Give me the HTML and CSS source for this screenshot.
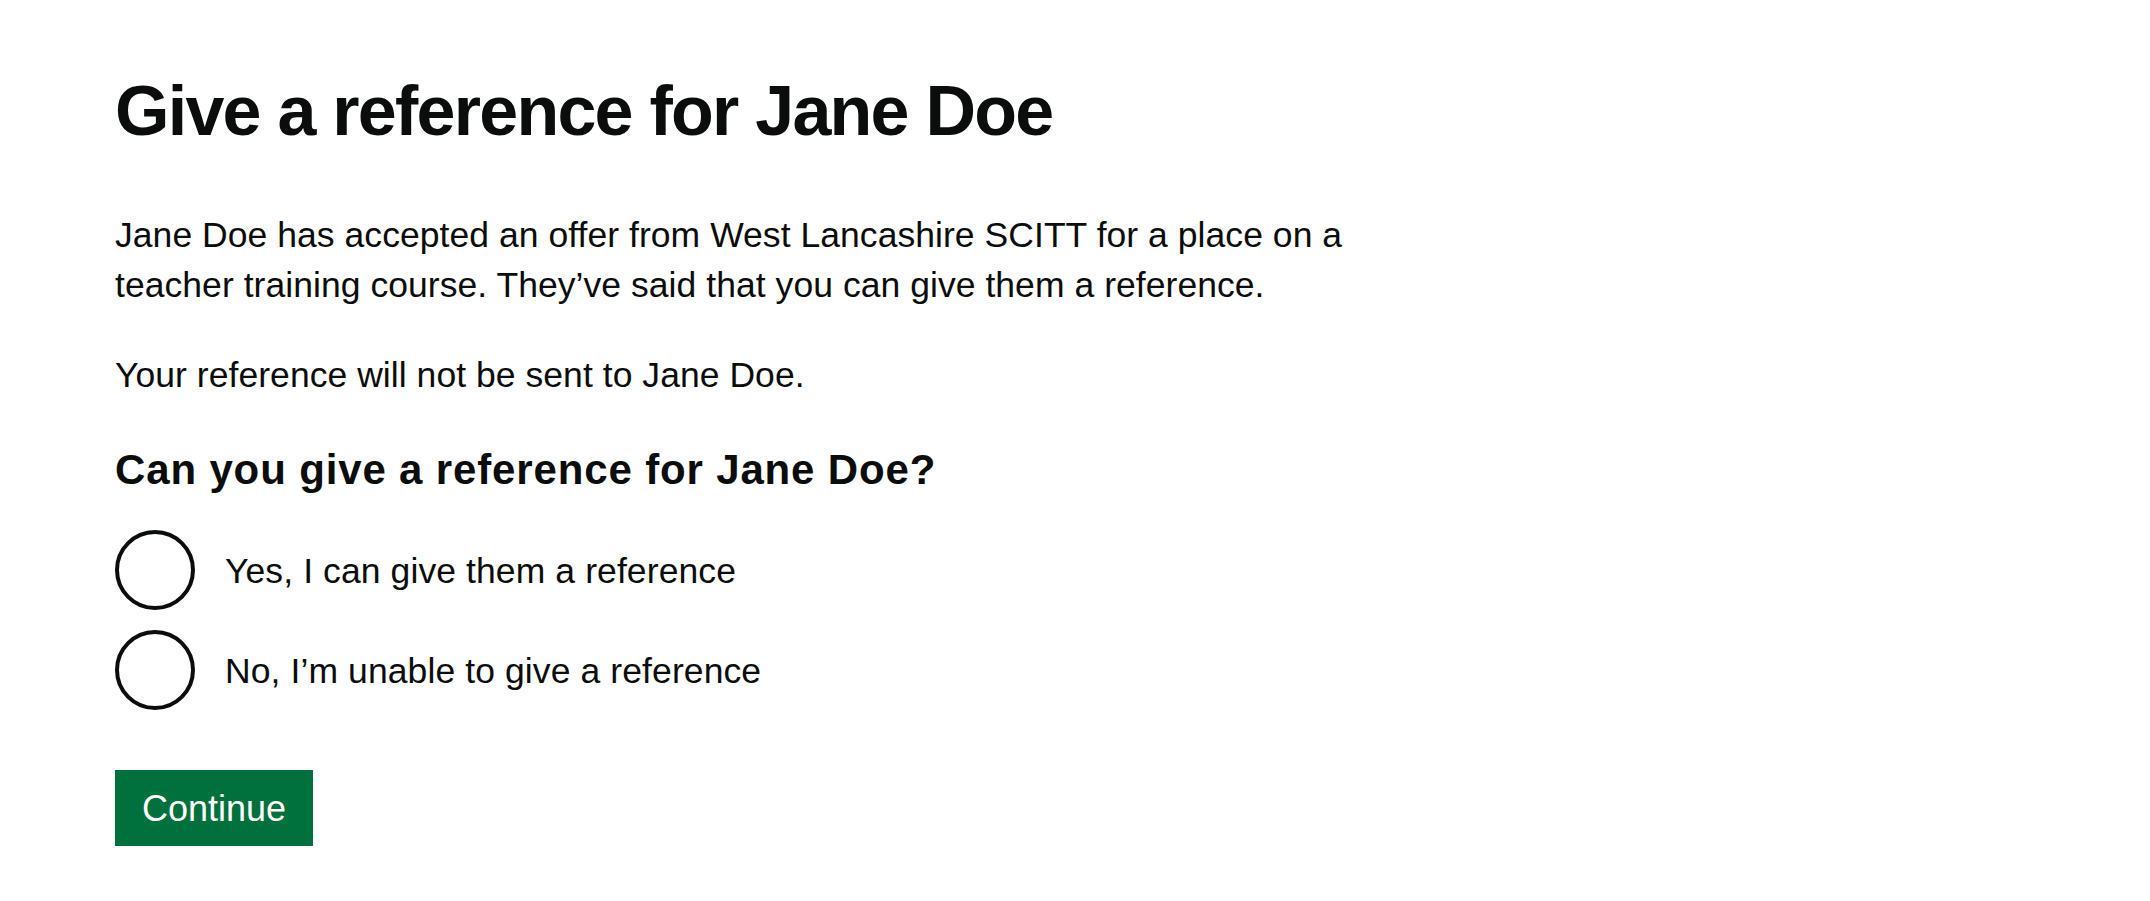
FILE: index.html
```html
<!DOCTYPE html>
<html lang="en">
<head>
<meta charset="utf-8">
<title>Give a reference for Jane Doe</title>
<link rel="stylesheet" href="styles.css">
</head>
<body>
<main class="main">
  <div class="column">
    <h1 class="heading-xl">Give a reference for Jane Doe</h1>
    <p class="body">Jane Doe has accepted an offer from West Lancashire SCITT for a place on a teacher training course. They’ve said that you can give them a reference.</p>
    <p class="body body-last">Your reference will not be sent to Jane Doe.</p>
    <form class="form">
      <fieldset class="fieldset">
        <legend class="legend">Can you give a reference for Jane Doe?</legend>
        <div class="radios">
          <label class="radio-item">
            <input class="radio-input" type="radio" name="can-give" value="yes">
            <span class="radio-label">Yes, I can give them a reference</span>
          </label>
          <label class="radio-item">
            <input class="radio-input" type="radio" name="can-give" value="no">
            <span class="radio-label">No, I’m unable to give a reference</span>
          </label>
        </div>
      </fieldset>
      <button class="button" type="button">Continue</button>
    </form>
  </div>
</main>
</body>
</html>
```
FILE: styles.css
```css
* { box-sizing: border-box; }

html, body {
  margin: 0;
  padding: 0;
  background: #ffffff;
}

body {
  font-family: "Liberation Sans", Arial, sans-serif;
  color: #0b0c0c;
}

.main {
  padding: 61px 0 0 115px;
}

.column {
  width: 1234px;
}

.heading-xl {
  margin: 0 0 49px;
  font-size: 70px;
  line-height: 100px;
  font-weight: 700;
  letter-spacing: -1.75px;
}

.body {
  margin: 0 0 40px;
  font-size: 35.5px;
  line-height: 50px;
  font-weight: 400;
  letter-spacing: 0.05px;
}

.body-last {
  margin-bottom: 40px;
}

.form {
  margin: 0;
}

.fieldset {
  margin: 0;
  padding: 0;
  border: 0;
  min-width: 0;
}

.legend {
  padding: 0;
  margin: 0 0 30px;
  font-size: 42px;
  line-height: 60px;
  font-weight: 700;
  letter-spacing: 0.85px;
}

.radios {
  display: flex;
  flex-direction: column;
  gap: 20px;
  margin-bottom: 60px;
}

.radio-item {
  display: flex;
  align-items: flex-start;
  gap: 30px;
  cursor: pointer;
}

.radio-input {
  -webkit-appearance: none;
  appearance: none;
  flex: 0 0 80px;
  width: 80px;
  height: 80px;
  margin: 0;
  border: 4px solid #0b0c0c;
  border-radius: 50%;
  background: #ffffff;
}

.radio-label {
  padding-top: 16px;
  font-size: 35.5px;
  line-height: 50px;
  letter-spacing: 0.1px;
}

.button {
  display: inline-block;
  margin: 0;
  padding: 16px 23px 14px;
  border: 4px solid transparent;
  border-radius: 0;
  background: #00703c;
  color: #ffffff;
  font-family: "Liberation Sans", Arial, sans-serif;
  font-size: 36px;
  line-height: 38px;
  font-weight: 400;
  box-shadow: 0 4px 0 #002d18;
  cursor: pointer;
}
```
